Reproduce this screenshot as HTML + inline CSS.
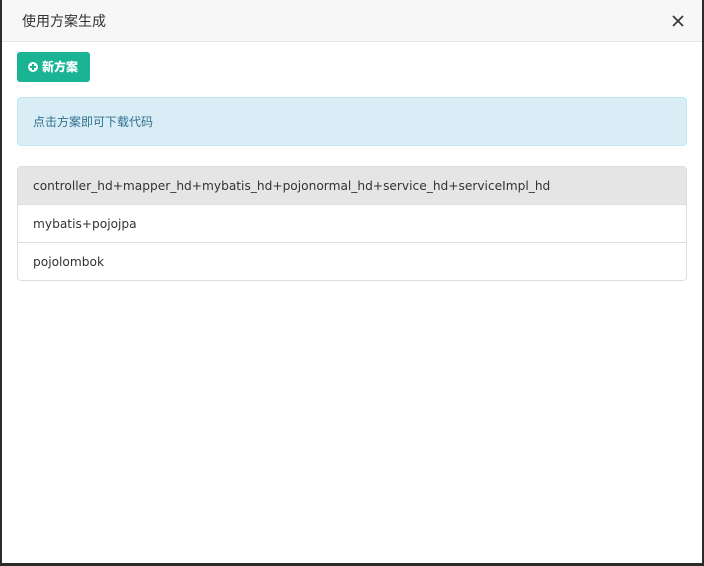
<!DOCTYPE html>
<html><head><meta charset="utf-8"><style>
body{margin:0;width:704px;height:566px;background:#2b2b2b;overflow:hidden;font-family:"DejaVu Sans","Noto Sans CJK SC",sans-serif;}
.m{position:absolute;left:2px;top:0;width:700px;height:563px;background:#fff;}
.h{height:41px;background:#f7f7f7;border-bottom:1px solid #e5e5e5;position:relative;}
.h span{position:absolute;left:20px;top:12px;font-size:14px;color:#333;font-family:"Noto Sans CJK SC",sans-serif;line-height:18px}
.x{position:absolute;left:670px;top:15px;}
.btn{position:absolute;left:15px;top:52px;width:73px;height:30px;background:#1ab394;border-radius:3px;color:#fff;font-size:12px;font-weight:bold;line-height:30px;font-family:"Noto Sans CJK SC",sans-serif;}
.btn i{position:absolute;left:11px;top:10px;width:10px;height:10px;border-radius:50%;background:#fff;}
.btn i:before{content:"";position:absolute;left:2px;top:4px;width:6px;height:2px;background:#1ab394}
.btn i:after{content:"";position:absolute;left:4px;top:2px;width:2px;height:6px;background:#1ab394}
.btn b{position:absolute;left:25px;}
.al{position:absolute;left:15px;top:97px;height:47px;background:#d9edf7;border:1px solid #bce8f1;border-radius:4px;color:#31708f;font-size:12px;line-height:48px;padding-left:15px;width:653px;font-family:"Noto Sans CJK SC",sans-serif;}
.lg{position:absolute;left:15px;top:166px;width:668px;border:1px solid #ddd;border-radius:4px;overflow:hidden;}
.lg div{height:37px;line-height:39px;padding-left:15px;font-size:12.2px;color:#333;border-top:1px solid #ddd;}
.lg div:first-child{border-top:none;background:#e6e5e5;}
</style></head><body>
<div class="m">
<div class="h"><span>使用方案生成</span>
<svg class="x" width="12" height="12" viewBox="0 0 12 12"><path d="M1 1L11 11M11 1L1 11" stroke="#333" stroke-width="1.6"/></svg></div>
<div class="btn"><i></i><b>新方案</b></div>
<div class="al">点击方案即可下载代码</div>
<div class="lg"><div>controller_hd+mapper_hd+mybatis_hd+pojonormal_hd+service_hd+serviceImpl_hd</div><div>mybatis+pojojpa</div><div>pojolombok</div></div>
</div>
</body></html>
